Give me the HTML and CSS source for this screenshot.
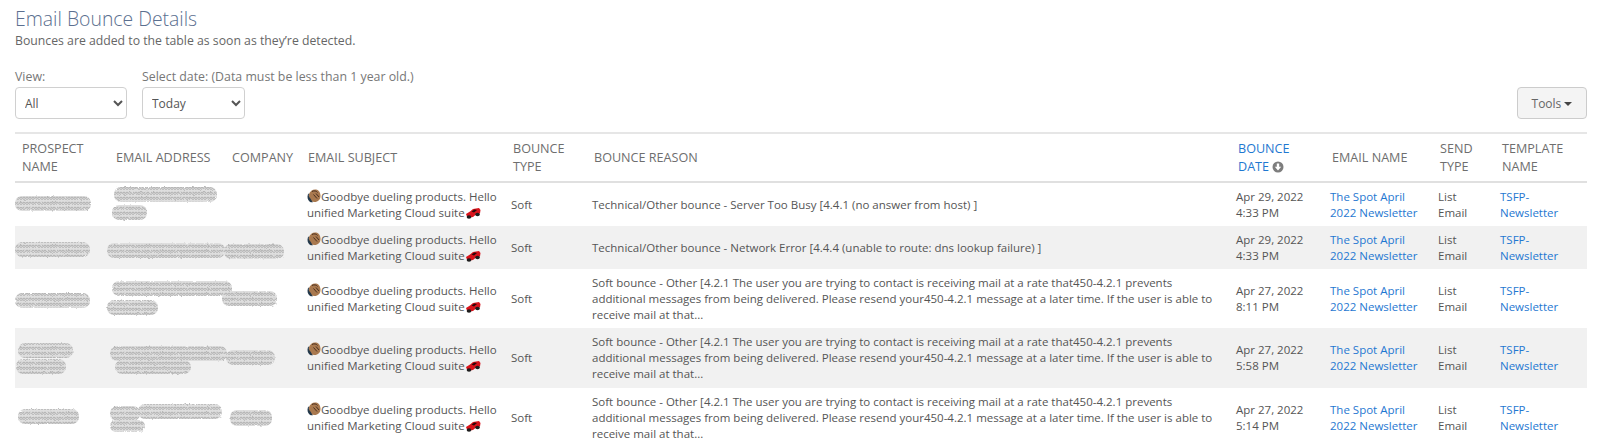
FILE: index.html
```html
<!DOCTYPE html>
<html lang="en">
<head>
<meta charset="utf-8">
<title>Email Bounce Details</title>
<link rel="stylesheet" href="styles.css">
</head>
<body>
<svg class="defs" width="0" height="0" aria-hidden="true"><defs>
<pattern id="scr" width="3" height="5" patternUnits="userSpaceOnUse"><rect width="3" height="5" fill="#dedede"/><path d="M0 1.500l1.500-1 1.500 1M0 4l1.500 1 1.500-1" fill="none" stroke="#b0b0b0" stroke-width="1"/></pattern>
<filter id="rough" x="-5%" y="-15%" width="110%" height="130%"><feTurbulence type="fractalNoise" baseFrequency="0.35" numOctaves="2" seed="4"/><feDisplacementMap in="SourceGraphic" scale="2.500"/></filter>
<g id="fist"><path d="M2 5c1-3 4-5 7-4.500 3 .5 4.500 3.500 4.500 6.500 0 3.500-2.500 6-6 6-2.500 0-5-1-6-4z" fill="#a9794f"/><path d="M1 5c-1 3-.5 6 1.500 7.500 1 .8 2.500 1 3.500 .7-1.500-1.200-1.800-3-3-4.200C2 8 1.500 6.500 2 4.500z" fill="#23384a"/><path d="M5 2.500c2-1 4.500-.8 5.500 1M6.500 5.500l3.500 4M9 4.500l3 3.500" fill="none" stroke="#4a3020" stroke-width="1"/></g>
<g id="car"><path d="M1 8l4-2.500 3-2.500 6-1 1.500 2-.5 3.500-4 1-3 2.500-5.500 1z" fill="#d8141c"/><path d="M6.500 5.500l3-2 2.500.5-3 2.500z" fill="#2a0709"/><ellipse cx="4" cy="11" rx="2.300" ry="1.700" fill="#1d1d1d"/><ellipse cx="12.500" cy="8.500" rx="2.300" ry="1.700" fill="#1d1d1d"/></g>
</defs></svg>

<main class="page">
  <h1 class="title">Email Bounce Details</h1>
  <p class="sub">Bounces are added to the table as soon as they’re detected.</p>

  <div class="toolbar">
    <div class="filters">
      <label class="field">View:
        <select class="sel sel-view"><option>All</option></select>
      </label>
      <label class="field">Select date: (Data must be less than 1 year old.)
        <select class="sel sel-date"><option>Today</option></select>
      </label>
    </div>
    <button class="tools" type="button">Tools <span class="caret"></span></button>
  </div>

  <table class="grid">
    <colgroup>
      <col class="c1"><col class="c2"><col class="c3"><col class="c4"><col class="c5"><col class="c6"><col class="c7"><col class="c8"><col class="c9"><col class="c10">
    </colgroup>
    <thead>
      <tr>
        <th>PROSPECT NAME</th>
        <th>EMAIL ADDRESS</th>
        <th>COMPANY</th>
        <th>EMAIL SUBJECT</th>
        <th>BOUNCE TYPE</th>
        <th>BOUNCE REASON</th>
        <th><a class="sort" href="#">BOUNCE DATE</a> <svg class="sort-ic" viewBox="0 0 12 12"><circle cx="6" cy="6" r="5.500" fill="#7d7d7d"/><path d="M4.800 2.500h2.400v3.200h2L6 9.500 2.800 5.700h2z" fill="#fff"/></svg></th>
        <th>EMAIL NAME</th>
        <th>SEND TYPE</th>
        <th>TEMPLATE NAME</th>
      </tr>
    </thead>
    <tbody>
      <tr class="r-a">
        <td class="red"><svg class="scrib" width="94" height="43"><rect x="0" y="13" width="76" height="15" rx="7" fill="url(#scr)"/></svg></td>
        <td class="red" colspan="2"><svg class="scrib" width="190" height="43"><rect x="5" y="4" width="103" height="15" rx="7" fill="url(#scr)"/><rect x="3" y="22" width="35" height="15" rx="7" fill="url(#scr)"/></svg></td>
        <td class="subj"><svg class="emo" viewBox="0 0 14 14"><use href="#fist"/></svg>Goodbye dueling products. Hello unified Marketing Cloud suite<svg class="emo-car" viewBox="0 1 16 12"><use href="#car"/></svg></td>
        <td>Soft</td>
        <td>Technical/Other bounce - Server Too Busy [4.4.1 (no answer from host) ]</td>
        <td>Apr 29, 2022<br>4:33 PM</td>
        <td><a href="#">The Spot April 2022 Newsletter</a></td>
        <td>List Email</td>
        <td><a href="#">TSFP-Newsletter</a></td>
      </tr>
      <tr class="r-a alt">
        <td class="red"><svg class="scrib" width="94" height="43"><rect x="0" y="16" width="75" height="15" rx="7" fill="url(#scr)"/></svg></td>
        <td class="red" colspan="2"><svg class="scrib" width="190" height="43"><rect x="-2" y="17" width="118" height="15" rx="7" fill="url(#scr)"/><rect x="115" y="18" width="60" height="15" rx="7" fill="url(#scr)"/></svg></td>
        <td class="subj"><svg class="emo" viewBox="0 0 14 14"><use href="#fist"/></svg>Goodbye dueling products. Hello unified Marketing Cloud suite<svg class="emo-car" viewBox="0 1 16 12"><use href="#car"/></svg></td>
        <td>Soft</td>
        <td>Technical/Other bounce - Network Error [4.4.4 (unable to route: dns lookup failure) ]</td>
        <td>Apr 29, 2022<br>4:33 PM</td>
        <td><a href="#">The Spot April 2022 Newsletter</a></td>
        <td>List Email</td>
        <td><a href="#">TSFP-Newsletter</a></td>
      </tr>
      <tr class="r-b">
        <td class="red"><svg class="scrib" width="94" height="59"><rect x="0" y="24" width="75" height="15" rx="7" fill="url(#scr)"/></svg></td>
        <td class="red" colspan="2"><svg class="scrib" width="190" height="59"><rect x="3" y="12" width="120" height="15" rx="7" fill="url(#scr)"/><rect x="113" y="22" width="55" height="15" rx="7" fill="url(#scr)"/><rect x="-2" y="31" width="51" height="15" rx="7" fill="url(#scr)"/></svg></td>
        <td class="subj"><svg class="emo" viewBox="0 0 14 14"><use href="#fist"/></svg>Goodbye dueling products. Hello unified Marketing Cloud suite<svg class="emo-car" viewBox="0 1 16 12"><use href="#car"/></svg></td>
        <td>Soft</td>
        <td>Soft bounce - Other [4.2.1 The user you are trying to contact is receiving mail at a rate that450-4.2.1 prevents additional messages from being delivered. Please resend your450-4.2.1 message at a later time. If the user is able to receive mail at that...</td>
        <td>Apr 27, 2022<br>8:11 PM</td>
        <td><a href="#">The Spot April 2022 Newsletter</a></td>
        <td>List Email</td>
        <td><a href="#">TSFP-Newsletter</a></td>
      </tr>
      <tr class="r-b alt">
        <td class="red"><svg class="scrib" width="94" height="60"><rect x="3" y="15" width="55" height="15" rx="7" fill="url(#scr)"/><rect x="1" y="31" width="50" height="15" rx="7" fill="url(#scr)"/></svg></td>
        <td class="red" colspan="2"><svg class="scrib" width="190" height="60"><rect x="1" y="18" width="117" height="15" rx="7" fill="url(#scr)"/><rect x="117" y="22" width="49" height="15" rx="7" fill="url(#scr)"/><rect x="6" y="32" width="76" height="14" rx="7" fill="url(#scr)"/></svg></td>
        <td class="subj"><svg class="emo" viewBox="0 0 14 14"><use href="#fist"/></svg>Goodbye dueling products. Hello unified Marketing Cloud suite<svg class="emo-car" viewBox="0 1 16 12"><use href="#car"/></svg></td>
        <td>Soft</td>
        <td>Soft bounce - Other [4.2.1 The user you are trying to contact is receiving mail at a rate that450-4.2.1 prevents additional messages from being delivered. Please resend your450-4.2.1 message at a later time. If the user is able to receive mail at that...</td>
        <td>Apr 27, 2022<br>5:58 PM</td>
        <td><a href="#">The Spot April 2022 Newsletter</a></td>
        <td>List Email</td>
        <td><a href="#">TSFP-Newsletter</a></td>
      </tr>
      <tr class="r-b">
        <td class="red"><svg class="scrib" width="94" height="59"><rect x="3" y="21" width="61" height="15" rx="7" fill="url(#scr)"/></svg></td>
        <td class="red" colspan="2"><svg class="scrib" width="190" height="59"><rect x="29" y="16" width="84" height="15" rx="7" fill="url(#scr)"/><rect x="1" y="18" width="30" height="15" rx="7" fill="url(#scr)"/><rect x="1" y="32" width="35" height="12" rx="6" fill="url(#scr)"/><rect x="121" y="22" width="42" height="16" rx="7" fill="url(#scr)"/></svg></td>
        <td class="subj"><svg class="emo" viewBox="0 0 14 14"><use href="#fist"/></svg>Goodbye dueling products. Hello unified Marketing Cloud suite<svg class="emo-car" viewBox="0 1 16 12"><use href="#car"/></svg></td>
        <td>Soft</td>
        <td>Soft bounce - Other [4.2.1 The user you are trying to contact is receiving mail at a rate that450-4.2.1 prevents additional messages from being delivered. Please resend your450-4.2.1 message at a later time. If the user is able to receive mail at that...</td>
        <td>Apr 27, 2022<br>5:14 PM</td>
        <td><a href="#">The Spot April 2022 Newsletter</a></td>
        <td>List Email</td>
        <td><a href="#">TSFP-Newsletter</a></td>
      </tr>
    </tbody>
  </table>
</main>
</body>
</html>
```
FILE: styles.css
```css
html, body { margin: 0; padding: 0; background: #fff; height: 443px; overflow: hidden; }
body { font-family: "Open Sans", "Liberation Sans", sans-serif; font-size: 12px; color: #555; }
.defs { position: absolute; }
.page { padding: 8px 13px 0 15px; }
.title { margin: 0; font-size: 19.400px; line-height: 22px; font-weight: 300; color: #5b6f8f; }
.sub { margin: 2px 0 0; font-size: 12.260px; line-height: 18px; color: #666; }
.toolbar { display: flex; justify-content: space-between; align-items: flex-end; margin-top: 19px; }
.filters { display: flex; gap: 15px; }
.field { display: flex; flex-direction: column; gap: 2px; font-size: 12.350px; line-height: 16px; color: #777; }
.sel { height: 32px; border: 1px solid #d0d0d0; border-radius: 4px; background: #fff; color: #555; font: inherit; font-size: 12px; padding-left: 5px; }
.sel-view { width: 112px; }
.sel-date { width: 103px; }
.tools { width: 70px; height: 32px; border: 1px solid #ccc; border-radius: 4px; background: #f4f4f4; font: inherit; color: #666; padding: 0; }
.caret { display: inline-block; border: 4px solid transparent; border-top-color: #444; border-bottom: 0; vertical-align: middle; }
.grid { width: 1572px; table-layout: fixed; border-collapse: collapse; margin-top: 13px; border-top: 2px solid #e6e6e6; }
.c1 { width: 94px; } .c2 { width: 115px; } .c3 { width: 76px; } .c4 { width: 205px; } .c5 { width: 81px; }
.c6 { width: 644px; } .c7 { width: 94px; } .c8 { width: 108px; } .c9 { width: 62px; } .c10 { width: 93px; }
th { padding: 0 8px; height: 47px; text-align: left; font-weight: 400; font-size: 12.600px; line-height: 18px; color: #6e6e6e; border-bottom: 2px solid #e0e0e0; vertical-align: middle; }
th:nth-child(-n+2) { padding-left: 7px; }
td { padding: 0 6px; font-size: 11.500px; line-height: 16px; color: #555; vertical-align: middle; }
.r-a td { height: 43px; }
.r-b td { height: 59px; }
.alt td { background: #f1f1f1; }
td.red { padding: 0; line-height: 0; }
.subj { padding-left: 7px; padding-right: 0; }
.scrib { display: block; overflow: visible; filter: url(#rough); }
.emo { width: 14px; height: 14px; vertical-align: -2px; }
.emo-car { width: 16px; height: 12px; vertical-align: -2px; }
a { color: #1f78d1; text-decoration: none; }
.sort { color: #1f78d1; }
.sort-ic { width: 12px; height: 12px; vertical-align: -2px; }
```
